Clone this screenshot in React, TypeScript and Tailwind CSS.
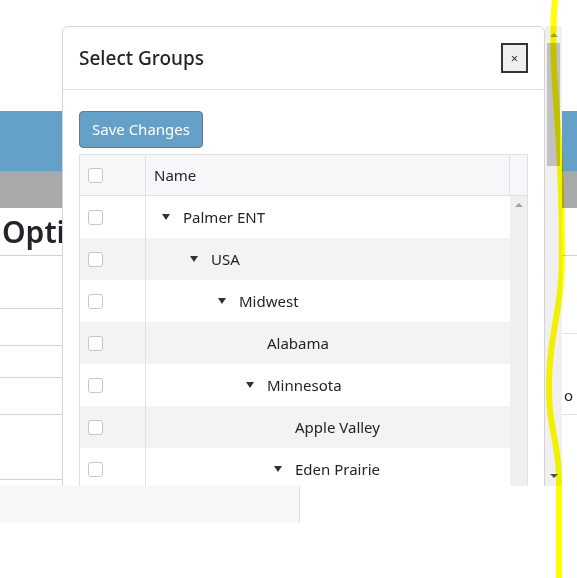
import React from "react";

type Group = { name: string; level: number; open?: boolean };

const groups: Group[] = [
  { name: "Palmer ENT", level: 0, open: true },
  { name: "USA", level: 1, open: true },
  { name: "Midwest", level: 2, open: true },
  { name: "Alabama", level: 3 },
  { name: "Minnesota", level: 3, open: true },
  { name: "Apple Valley", level: 4 },
  { name: "Eden Prairie", level: 4, open: true },
];

function Checkbox() {
  return <span className="block h-[15px] w-[15px] rounded-[3px] border border-[#c6c6c6] bg-white" />;
}

function Caret() {
  return (
    <svg width="8" height="6" viewBox="0 0 8 6" className="shrink-0">
      <polygon points="0,0 8,0 4,6" fill="#333" />
    </svg>
  );
}

function Arrow({ up, color }: { up?: boolean; color: string }) {
  return (
    <svg width="8" height="4" viewBox="0 0 8 4">
      <polygon points={up ? "0,4 8,4 4,0" : "0,0 8,0 4,4"} fill={color} />
    </svg>
  );
}

function GroupRow({ group, index }: { group: Group; index: number }) {
  return (
    <div className={`flex h-[42px] ${index % 2 ? "bg-[#f3f3f3]" : "bg-white"}`}>
      <div className="flex w-[66px] shrink-0 items-center border-r border-[#dee2e6] pl-[8px]">
        <Checkbox />
      </div>
      <div className="flex flex-1 items-center gap-[13px]" style={{ paddingLeft: 16 + group.level * 28 }}>
        {group.open ? <Caret /> : <span className="w-[8px]" />}
        <span>{group.name}</span>
      </div>
    </div>
  );
}

function SelectGroups() {
  return (
    <div className="absolute left-[62px] top-[26px] flex">
      <div className="h-[470px] w-[483px] rounded-t-[6px] border border-[#d4d4d4] bg-white">
        <div className="flex h-[63px] items-center justify-between border-b border-[#dee2e6] px-[16px]">
          <h5 className="text-[19px] font-medium leading-[32px]">Select Groups</h5>
          <button className="flex h-[30px] w-[27px] items-center justify-center border-2 border-[#333] bg-[#efefef] text-[13px] leading-none text-[#333]">
            ×
          </button>
        </div>
        <div className="px-[16px] pt-[21px]">
          <button className="h-[37px] rounded-[4px] border border-[#6e7880] bg-[#64a0c8] px-[12px] text-white">
            Save Changes
          </button>
          <div className="mt-[6px] border border-[#dee2e6]">
            <div className="flex h-[41px] border-b border-[#dee2e6] bg-[#f6f7f9]">
              <div className="flex w-[66px] items-center border-r border-[#dee2e6] pl-[8px]">
                <Checkbox />
              </div>
              <div className="flex flex-1 items-center pl-[8px]">Name</div>
              <div className="w-[18px] border-l border-[#dee2e6]" />
            </div>
            <div className="flex">
              <div className="flex-1">
                {groups.map((g, i) => (
                  <GroupRow key={g.name} group={g} index={i} />
                ))}
              </div>
              <div className="flex w-[17px] justify-center bg-[#f0f0f0] pt-[7px]">
                <div>
                  <Arrow up color="#a3a3a3" />
                </div>
              </div>
            </div>
          </div>
        </div>
      </div>
      {/* page scrollbar */}
      <div className="relative h-[460px] w-[17px] bg-[#f0f0f0]">
        <div className="flex justify-center pt-[7px]">
          <Arrow up color="#a3a3a3" />
        </div>
        <div className="mx-[2px] mt-[6px] h-[123px] bg-[#c1c1c1]" />
        <div className="absolute bottom-[8px] left-0 flex w-full justify-center">
          <Arrow color="#505050" />
        </div>
      </div>
    </div>
  );
}

export default function App() {
  return (
    <div className="relative h-[578px] w-[577px] overflow-hidden bg-white font-['Noto_Sans',sans-serif] text-[15px] text-[#212529]">
      <div className="relative h-[486px] overflow-hidden">
        <div className="h-[111px]" />
        <div className="h-[60px] bg-[#64a0c8]" />
        <div className="h-[37px] bg-[#a9a9a9]" />
        <div className="flex h-[48px] items-center border-b border-[#ced4da] pl-[2px]">
          <h2 className="text-[30px] font-semibold leading-none">Options</h2>
        </div>
        <div className="flex">
          <div className="w-[300px]">
            <div className="h-[53px] border-b border-[#ced4da]" />
            <div className="h-[37px] border-b border-[#ced4da]" />
            <div className="h-[32px] border-b border-[#ced4da]" />
            <div className="h-[37px] border-b border-[#ced4da]" />
            <div className="h-[65px] border-b border-[#ced4da]" />
          </div>
          <div className="flex-1" />
          <div className="w-[15px]">
            <div className="h-[78px] border-b border-[#dee2e6]" />
            <div className="flex h-[81px] items-end border-b border-[#dee2e6] pb-[8px] pl-[2px]">o</div>
          </div>
        </div>
        <SelectGroups />
      </div>
      <div className="h-[37px] w-[300px] border-r border-[#dee2e6] bg-[#f6f7f9]" />
      <svg
        className="pointer-events-none absolute left-0 top-0 mix-blend-multiply"
        width="577"
        height="578"
        viewBox="0 0 577 578"
      >
        <path
          d="M555 0 C553 20 553 60 556 100 S562 200 562 255 S550 330 549 380 S559 440 559 480 L559 578"
          fill="none"
          stroke="#ffff00"
          strokeWidth="6"
          strokeLinecap="round"
        />
      </svg>
    </div>
  );
}
